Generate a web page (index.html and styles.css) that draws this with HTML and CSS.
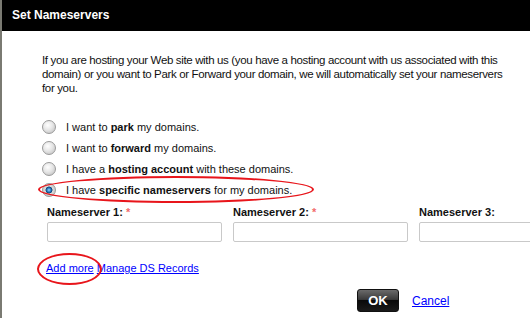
FILE: index.html
```html
<!DOCTYPE html>
<html lang="en">
  <head>
    <meta charset="utf-8" />
    <title>Set Nameservers</title>
    <link rel="stylesheet" href="styles.css">
  </head>
  <body>
    <div class="dialog">
      <div class="titlebar">Set Nameservers</div>
      <div class="content">
        <p class="intro">If you are hosting your Web site with us (you have a hosting account with us associated with this domain) or you want to Park or Forward your domain, we will automatically set your nameservers for you.</p>

        <ul class="options">
          <li><input type="radio" name="ns" id="opt-park"><label for="opt-park">I want to <b>park</b> my domains.</label></li>
          <li><input type="radio" name="ns" id="opt-fwd"><label for="opt-fwd">I want to <b>forward</b> my domains.</label></li>
          <li><input type="radio" name="ns" id="opt-host"><label for="opt-host">I have a <b>hosting account</b> with these domains.</label></li>
          <li class="marked"><input type="radio" name="ns" id="opt-spec" checked><label for="opt-spec">I have <b>specific nameservers</b> for my domains.</label></li>
        </ul>

        <div class="servers">
          <div class="field">
            <label>Nameserver 1: <span class="req">*</span></label>
            <input type="text">
          </div>
          <div class="field">
            <label>Nameserver 2: <span class="req">*</span></label>
            <input type="text">
          </div>
          <div class="field">
            <label>Nameserver 3:</label>
            <input type="text">
          </div>
        </div>

        <div class="links">
          <a href="#" class="marked-link">Add more</a>
          <a href="#">Manage DS Records</a>
        </div>

        <div class="actions">
          <button class="ok">OK</button>
          <a href="#" class="cancel">Cancel</a>
        </div>
      </div>
    </div>
  </body>
</html>
```

FILE: styles.css
```css
* {
  margin: 0;
  padding: 0;
  box-sizing: border-box;
}
body {
  background: #fff;
  font-family: "Liberation Sans", Arial, sans-serif;
  color: #111;
  overflow: hidden;
}
.dialog {
  width: 530px;
  height: 318px;
  overflow: hidden;
  border-left: 2px solid #7a7a72;
}
.titlebar {
  background: #000;
  color: #fff;
  font-weight: bold;
  font-size: 12px;
  height: 31px;
  line-height: 31px;
  margin-left: -2px;
  padding-left: 12px;
}
.content {
  width: 560px;
  padding: 22px 0 0 40px;
}
.intro {
  font-size: 11.5px;
  letter-spacing: -0.35px;
  line-height: 14px;
  width: 470px;
}
.options {
  list-style: none;
  margin-top: 21px;
}
.options li {
  position: relative;
  display: flex;
  align-items: center;
  height: 21px;
  font-size: 11px;
}
.options input {
  appearance: none;
  width: 14px;
  height: 14px;
  margin: 0 10px 0 0;
  border: 1px solid #9a9a9a;
  border-radius: 50%;
  background: radial-gradient(circle at 40% 35%, #ffffff 0%, #e6e6e6 45%, #b9b9b9 100%);
}
.options input:checked {
  background: radial-gradient(circle at 50% 50%, #9ad6ff 0%, #2a7fc4 22%, #0d3f6e 38%, #dcdcdc 44%, #b9b9b9 100%);
}
.marked::after {
  content: "";
  position: absolute;
  left: -4px;
  top: -3px;
  width: 272px;
  height: 23px;
  border: 2px solid #e8151b;
  border-radius: 50%;
}
.servers {
  display: flex;
  gap: 11px;
  margin-top: 6px;
  padding-left: 5px;
}
.field label {
  display: block;
  font-size: 11px;
  font-weight: bold;
  height: 16px;
  line-height: 13px;
}
.req {
  color: #f26b6b;
}
.field input {
  display: block;
  width: 175px;
  height: 20px;
  border: 1px solid #c9c9c9;
  border-radius: 2px;
}
.links {
  position: relative;
  margin-top: 20px;
  padding-left: 4px;
  font-size: 11px;
}
.links a {
  color: #0000ff;
}
.marked-link::after {
  content: "";
  position: absolute;
  left: -5px;
  top: -9px;
  width: 61px;
  height: 28px;
  border: 2px solid #e8151b;
  border-radius: 50%;
}
.actions {
  display: flex;
  align-items: center;
  gap: 13px;
  margin-top: 15px;
  padding-left: 315px;
}
.ok {
  width: 42px;
  height: 23px;
  border: 1px solid #111;
  border-radius: 3px;
  background: linear-gradient(#6a6a6a 0%, #3a3a3a 45%, #0a0a0a 50%, #1a1a1a 100%);
  color: #fff;
  font-family: "Liberation Sans", Arial, sans-serif;
  font-weight: bold;
  font-size: 13px;
}
.cancel {
  color: #0000ff;
  font-size: 12px;
}
```
